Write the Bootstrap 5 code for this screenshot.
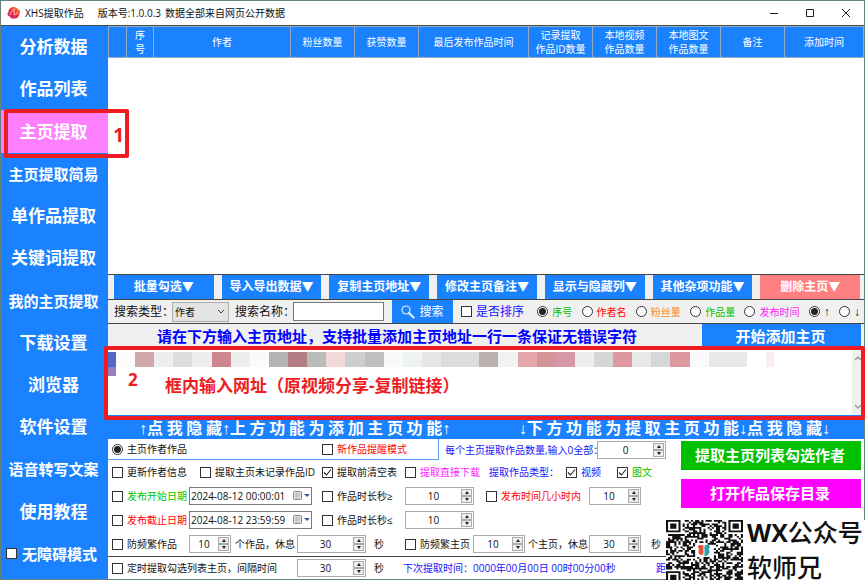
<!DOCTYPE html>
<html lang="zh-CN">
<head>
<meta charset="utf-8">
<meta name="viewport" content="width=device-width, initial-scale=1">
<title>XHS提取作品</title>
<link href="https://cdn.jsdelivr.net/npm/bootstrap@5.3.0/dist/css/bootstrap.min.css" rel="stylesheet">
<style>
:root { --blue: #1b82ff; --line: #454545; }
body { font: 10px/14px "Open Sans", "Noto Sans CJK SC", sans-serif; color: #111; background: #fff; }
button, input, select { font: inherit; color: inherit; border-radius: 0; }
.app { min-height: 100vh; border: 1px solid #66807c; }
.titlebar { height: 25px; border-bottom: 1px solid #454a42; padding-left: 6px; gap: 4px; }
.titlebar .brand { margin-right: 10px; }
.winbtn { width: 36px; border: 0; background: none; padding: 0; line-height: 0; }
.blue { background: var(--blue); color: #fff; }
.side { width: 107px; padding-bottom: 4px; }
.side button, .side label { font-size: 17px; line-height: 22px; font-weight: 700; color: #fff; background: none; border: 0; padding: 0 2px 0 0; white-space: nowrap; }
.side .long { font-size: 15px; }
.side button.current { background: #ff80ff; }
.access { padding-left: 5px; gap: 1px; }
.body-col { min-width: 0; }
.heads { table-layout: fixed; font-size: 10px; line-height: 14px; color: #fff; }
.heads th { background: var(--blue); font-weight: 400; height: 31px; padding: 0; border: 1px solid #94aac4; text-align: center; vertical-align: middle; }
.w18 { width: 18px; } .w27 { width: 27px; } .w64 { width: 64px; } .w79 { width: 79px; } .w110 { width: 110px; }
.gray { background: #f0f0f0; }
.rule { border-top: 1px solid var(--line); }
.tools { padding: 0 4px 0 6px; gap: 8px; height: 25px; }
.tools button { border: 0; font-size: 12px; font-weight: 700; flex: 1 1 0; padding: 0 0 1px; white-space: nowrap; }
.danger { background: #ff8080; color: #fff; }
.search { height: 24px; padding: 0 4px 0 6px; font-size: 12px; white-space: nowrap; }
.search .cap { width: 58px; }
.search .choice { font-size: 10px; }
.search .sorting { font-size: 12px; margin-right: 4px; }
.search select { width: 57px; height: 20px; font-size: 10px; padding: 0 2px; border: 1px solid #adadad; background: #e3e3e3; appearance: none; }
.pick { width: 57px; margin-right: 6px; }
.pick svg { right: 4px; top: 7px; pointer-events: none; }
.search .name { width: 91px; height: 19px; border: 1px solid #777; background: #fff; margin-right: 8px; }
.go { width: 61px; height: 23px; border: 0; padding: 0; }
input[type=checkbox], input[type=radio] { appearance: none; width: 11px; height: 11px; margin: 0 4px 0 0; border: 1px solid #333; background: #fff; flex: none; }
input[type=radio] { border-radius: 50%; }
input[type=radio]:checked { background: radial-gradient(circle, #222 0 3px, #fff 4px); }
input[type=checkbox]:checked { background: #fff url("data:image/svg+xml,%3Csvg xmlns='http://www.w3.org/2000/svg' viewBox='0 0 9 9'%3E%3Cpath d='M1 4.5 3.5 7 8 1.5' fill='none' stroke='%23222' stroke-width='1.1'/%3E%3C/svg%3E"); }
.choice { display: inline-flex; align-items: center; white-space: nowrap; }
.c-green { color: #00c400; } .c-red { color: #f00; } .c-orange { color: #ff8a1c; } .c-pink { color: #ff1cff; } .c-blue { color: #1414ff; }
.notice { height: 27px; font-size: 15px; font-weight: 700; padding-right: 3px; }
.notice p { color: #00f; padding: 0 16px 2px 0; white-space: nowrap; }
.notice button { width: 159px; border: 0; font-size: 15px; font-weight: 700; padding: 0 2px 3px 0; }
.urls { height: 66px; border-bottom: 1px solid var(--blue); }
.urls textarea { border: 0; resize: none; outline: 0; overflow: hidden; }
.scroller { width: 12px; padding: 5px 0; background: #f0f0f0; }
.strip { left: 0; top: 2px; }
.toggles { height: 23px; font: 700 16px/20px "Noto Sans CJK SC", sans-serif; white-space: nowrap; padding: 0 34px 0 31px; }
.arrow { font-family: "Liberation Sans", sans-serif; font-weight: 400; }
.search .arrow { font-size: 12px; font-weight: 700; }
.toggles button { border: 0; background: none; padding: 0; color: #fff; font-weight: 700; }
.panel { height: 140px; white-space: nowrap; }
.line { display: grid; align-items: center; padding-left: 4px; height: 24px; }
.mode { width: 331px; height: 21px; border: 1px solid #5da0f5; border-left: 0; border-top: 0; grid-template-columns: 210px 1fr; }
.top-line { height: 21px; }
.amount { width: 152px; margin-left: 6px; }
.l2 { grid-template-columns: 88px 122px 83px 84px 77px 51px 1fr; }
.l3 { grid-template-columns: 77px 133px 83px 81px 103px 1fr; }
.l5 { grid-template-columns: 77px 46px 62px 77px 31px 68px 55px 61px 62px 1fr; }
.l6 { grid-template-columns: 185px 77px 29px 70px 183px 1fr; height: 23px; }
.spin, .when { display: flex; height: 18px; border: 1px solid #ababab; background: #fff; }
.when { width: 123px; border-color: #7a7a7a; }
.spin input, .when input { flex: 1 1 0; min-width: 0; border: 0; padding: 0; background: none; outline: 0; }
.spin input { text-align: center; }
.when input { padding-left: 1px; }
.when button { border: 0; background: none; padding: 0 1px 0 0; line-height: 0; }
.s42 { width: 42px; } .s52 { width: 52px; } .s69 { width: 69px; }
.ud { width: 12px; display: flex; flex-direction: column; padding: 1px 1px 1px 0; }
.ud button { flex: 1; border: 1px solid #aaa; background: #eee; padding: 0; min-height: 0; }
.ud button::after { content: ""; display: block; width: 0; margin: auto; border: 2px solid transparent; border-top-width: 0; border-bottom: 3px solid #222; }
.ud button + button::after { border-bottom-width: 0; border-top: 3px solid #222; }
.actions { width: 183px; padding: 2px 3px 0 0; gap: 9px; }
.actions button { height: 29px; border: 0; color: #fff; font-size: 15px; font-weight: 700; padding: 0 2px 2px 0; }
.save { background: #f0f; } .fetch { background: #00c000; }
.frame { border: 4px solid #ee1c22; border-radius: 2px; pointer-events: none; color: #ee1c22; font-size: 17px; line-height: 22px; font-weight: 700; z-index: 3; }
.frame1 { left: 3px; top: -1px; right: -21px; bottom: -5px; }
.frame1 span { right: 1px; top: 11px; font-size: 19px; }
.frame2 { left: -4px; right: -1px; top: -4px; bottom: -5px; }
.n2 { left: 20px; top: 19px; } .tip { left: 57px; top: 25px; white-space: nowrap; }
.account { right: -1px; bottom: -1px; width: 199px; height: 60px; background: #fff; font: 500 25px/25px "Open Sans", "Noto Sans CJK SC", sans-serif; color: #111; white-space: nowrap; z-index: 4; gap: 4px; }
.account b { font-weight: 700; }
</style>
<script src="https://cdn.jsdelivr.net/npm/bootstrap@5.3.0/dist/js/bootstrap.bundle.min.js"></script>
</head>
<body>
<div class="app d-flex flex-column position-relative">
  <header class="titlebar d-flex align-items-center">
    <svg width="14" height="14" viewBox="0 0 14 14" aria-hidden="true"><defs><linearGradient id="lg" x1="0" y1="1" x2="1" y2="0"><stop offset="0" stop-color="#b42a86"/><stop offset=".5" stop-color="#ee2c3c"/><stop offset="1" stop-color="#ff9a3c"/></linearGradient></defs><path d="M7 1C9 1 10 2 11 3c2 1 3 3 1.500 5C12 11 10 13 7 12.500 5 13 3 12 3 10.500 0 10 0 7 1.500 6 1 3 4 1 7 1Z" fill="url(#lg)"/><path d="M3 9C4 5 6 4 7 5s-1 4 1 4 1-4 3-2M6 4l2-1" fill="none" stroke="#fff" stroke-opacity=".7"/></svg>
    <span class="brand">XHS提取作品</span><span>版本号:1.0.0.3</span><span>数据全部来自网页公开数据</span>
    <div class="ms-auto d-flex">
      <button class="winbtn" aria-label="最小化"><svg width="12" height="12"><path d="M2 6.500h8" stroke="#222"/></svg></button>
      <button class="winbtn" aria-label="最大化"><svg width="12" height="12"><path d="M2.500 2.500h7v7h-7z" fill="none" stroke="#222"/></svg></button>
      <button class="winbtn" aria-label="关闭"><svg width="12" height="12"><path d="m2 2 8 8m0-8-8 8" stroke="#222"/></svg></button>
    </div>
  </header>
  <div class="d-flex flex-grow-1">
    <nav class="side blue d-flex flex-column flex-shrink-0">
      <button class="flex-fill">分析数据</button>
      <button class="flex-fill">作品列表</button>
      <div class="flex-fill d-flex position-relative"><button class="current w-100">主页提取</button><div class="frame frame1 position-absolute"><span class="position-absolute">1</span></div></div>
      <button class="flex-fill long">主页提取简易</button>
      <button class="flex-fill">单作品提取</button>
      <button class="flex-fill">关键词提取</button>
      <button class="flex-fill long">我的主页提取</button>
      <button class="flex-fill">下载设置</button>
      <button class="flex-fill">浏览器</button>
      <button class="flex-fill">软件设置</button>
      <button class="flex-fill long">语音转写文案</button>
      <button class="flex-fill">使用教程</button>
      <div class="access flex-fill d-flex align-items-center"><input type="checkbox" id="acc"><label for="acc" class="long">无障碍模式</label></div>
    </nav>
    <main class="body-col flex-grow-1 d-flex flex-column">
      <div class="flex-grow-1">
        <table class="heads w-100">
          <thead><tr><th class="w18" aria-label="选择"></th><th class="w27">序<br>号</th><th>作者</th><th class="w64">粉丝数量</th><th class="w64">获赞数量</th><th class="w110">最后发布作品时间</th><th class="w64">记录提取<br>作品ID数量</th><th class="w64">本地视频<br>作品数量</th><th class="w64">本地图文<br>作品数量</th><th class="w64">备注</th><th class="w79">添加时间</th></tr></thead>
        </table>
      </div>
      <div class="tools gray rule d-flex">
        <button class="blue">批量勾选▼</button><button class="blue">导入导出数据▼</button><button class="blue">复制主页地址▼</button><button class="blue">修改主页备注▼</button><button class="blue">显示与隐藏列▼</button><button class="blue">其他杂项功能▼</button><button class="danger">删除主页▼</button>
      </div>
      <form class="search gray rule d-flex align-items-center">
        <label class="cap" for="kind">搜索类型：</label>
        <div class="pick position-relative d-flex"><select id="kind"><option>作者</option></select><svg class="position-absolute" width="8" height="6"><path d="m1 1 3 3 3-3" fill="none" stroke="#444"/></svg></div>
        <label class="cap" for="key">搜索名称：</label><input class="name" id="key" type="text">
        <button type="button" class="go blue d-flex align-items-center justify-content-center me-2"><svg width="14" height="14" viewBox="0 0 14 14" class="me-1"><circle cx="5" cy="5" r="4" fill="none" stroke="#e2efff" stroke-width="1.200"/><path d="m8 8 4.500 4.500" stroke="#d8e8ff" stroke-width="2.400" stroke-linecap="round"/></svg>搜索</button>
        <div class="d-flex flex-grow-1 justify-content-between align-items-center">
          <label class="choice sorting c-blue"><input type="checkbox">是否排序</label>
          <label class="choice c-green"><input type="radio" name="sort" checked>序号</label>
          <label class="choice c-red"><input type="radio" name="sort">作者名</label>
          <label class="choice c-orange"><input type="radio" name="sort">粉丝量</label>
          <label class="choice c-green"><input type="radio" name="sort">作品量</label>
          <label class="choice c-pink"><input type="radio" name="sort">发布时间</label>
          <label class="choice"><input type="radio" name="dir" checked><span class="arrow">↑</span></label>
          <label class="choice"><input type="radio" name="dir"><span class="arrow">↓</span></label>
        </div>
      </form>
      <div class="notice gray rule d-flex">
        <p class="mb-0 flex-grow-1 d-flex align-items-center justify-content-center">请在下方输入主页地址，支持批量添加主页地址一行一条保证无错误字符</p>
        <button class="blue">开始添加主页</button>
      </div>
      <div class="urls d-flex position-relative">
        <textarea class="flex-grow-1" aria-label="主页地址"></textarea>
        <svg id="strip" class="strip position-absolute" width="700" height="24" aria-hidden="true"></svg>
        <div class="scroller d-flex flex-column justify-content-between align-items-center"><svg width="8" height="6"><path d="m1 5 3-3 3 3" fill="none" stroke="#999" stroke-width="1.500"/></svg><svg width="8" height="6"><path d="m1 1 3 3 3-3" fill="none" stroke="#999" stroke-width="1.500"/></svg></div>
        <div class="frame frame2 position-absolute"><span class="n2 position-absolute">2</span><span class="tip position-absolute">框内输入网址（原视频分享-复制链接）</span></div>
      </div>
      <div class="toggles blue d-flex align-items-end justify-content-between">
        <button><span class="arrow">↑</span>点 我 隐 藏<span class="arrow">↑</span>上 方 功 能 为 添 加 主 页 功 能<span class="arrow">↑</span></button>
        <button><span class="arrow">↓</span>下 方 功 能 为 提 取 主 页 功 能<span class="arrow">↓</span>点 我 隐 藏<span class="arrow">↓</span></button>
      </div>
      <section class="panel position-relative d-flex">
        <div class="flex-grow-1">
          <div class="d-flex align-items-center top-line">
            <div class="mode line"><label class="choice"><input type="radio" name="mode" checked>主页作者作品</label><label class="choice c-red"><input type="checkbox">新作品提醒模式</label></div>
            <label class="c-blue amount" for="n0">每个主页提取作品数量,输入0全部：</label>
            <div class="spin s69"><input id="n0" value="0"><span class="ud"><button aria-label="增加"></button><button aria-label="减少"></button></span></div>
          </div>
          <div class="line l2">
            <label class="choice"><input type="checkbox">更新作者信息</label>
            <label class="choice"><input type="checkbox">提取主页未记录作品ID</label>
            <label class="choice"><input type="checkbox" checked>提取前清空表</label>
            <label class="choice c-pink"><input type="checkbox">提取直接下载</label>
            <span class="c-blue">提取作品类型：</span>
            <label class="choice c-blue"><input type="checkbox" checked>视频</label>
            <label class="choice c-green"><input type="checkbox" checked>图文</label>
          </div>
          <div class="line l3">
            <label class="choice c-green"><input type="checkbox">发布开始日期</label>
            <div class="when"><input aria-label="开始日期" value="2024-08-12 00:00:01"><button aria-label="选择日期"><svg width="18" height="12"><rect x="1.500" y="1.500" width="8" height="8" rx="1" fill="#dcdce0" stroke="#8d8790"/><path d="M3 4h5M3 6h5M5 3v6" stroke="#b9b9c4"/><path d="M12 4h6l-3 3z" fill="#3c5a96"/></svg></button></div>
            <label class="choice"><input type="checkbox">作品时长秒≥</label>
            <div class="spin s69"><input aria-label="最短秒数" value="10"><span class="ud"><button aria-label="增加"></button><button aria-label="减少"></button></span></div>
            <label class="choice c-red"><input type="checkbox">发布时间几小时内</label>
            <div class="spin s52"><input aria-label="小时" value="10"><span class="ud"><button aria-label="增加"></button><button aria-label="减少"></button></span></div>
          </div>
          <div class="line l3">
            <label class="choice c-red"><input type="checkbox">发布截止日期</label>
            <div class="when"><input aria-label="截止日期" value="2024-08-12 23:59:59"><button aria-label="选择日期"><svg width="18" height="12"><rect x="1.500" y="1.500" width="8" height="8" rx="1" fill="#dcdce0" stroke="#8d8790"/><path d="M3 4h5M3 6h5M5 3v6" stroke="#b9b9c4"/><path d="M12 4h6l-3 3z" fill="#3c5a96"/></svg></button></div>
            <label class="choice"><input type="checkbox">作品时长秒≤</label>
            <div class="spin s69"><input aria-label="最长秒数" value="10"><span class="ud"><button aria-label="增加"></button><button aria-label="减少"></button></span></div>
          </div>
          <div class="line l5">
            <label class="choice"><input type="checkbox">防频繁作品</label>
            <div class="spin s42"><input aria-label="作品个数" value="10"><span class="ud"><button aria-label="增加"></button><button aria-label="减少"></button></span></div>
            <span>个作品，休息</span>
            <div class="spin s69"><input aria-label="作品休息秒数" value="30"><span class="ud"><button aria-label="增加"></button><button aria-label="减少"></button></span></div>
            <span>秒</span>
            <label class="choice"><input type="checkbox">防频繁主页</label>
            <div class="spin s52"><input aria-label="主页个数" value="10"><span class="ud"><button aria-label="增加"></button><button aria-label="减少"></button></span></div>
            <span>个主页，休息</span>
            <div class="spin s52"><input aria-label="主页休息秒数" value="30"><span class="ud"><button aria-label="增加"></button><button aria-label="减少"></button></span></div>
            <span>秒</span>
          </div>
          <div class="line l6 rule">
            <label class="choice"><input type="checkbox">定时提取勾选列表主页，间隔时间</label>
            <div class="spin s69"><input aria-label="间隔秒数" value="30"><span class="ud"><button aria-label="增加"></button><button aria-label="减少"></button></span></div>
            <span>秒</span><span class="c-blue">下次提取时间：</span><span class="c-blue">0000年00月00日 00时00分00秒</span><span class="c-blue">距</span>
          </div>
        </div>
        <div class="actions d-flex flex-column flex-shrink-0">
          <button class="fetch">提取主页列表勾选作者</button>
          <button class="save">打开作品保存目录</button>
        </div>
        <aside class="account position-absolute d-flex">
          <svg id="qr" class="flex-shrink-0" width="77" height="60" viewBox="0 0 37 34" preserveAspectRatio="none" role="img" aria-label="二维码"></svg>
          <div class="d-flex flex-column justify-content-between"><div><b>WX</b>公众号</div><div>软师兄</div></div>
        </aside>
      </section>
    </main>
  </div>
</div>
<script>
const cells = ['fcfcfa','cfa9ab','eee','ddd','eee','cd888f','eee','fafafa','b3b3b3','b37e84','bbb','f1d9db','ccced0','bfbfbd','f9f9f8','eff2f2','e6e6e6','dedbdb','dbdddc','bab0b0','f2f2f2','e4a5ab','d3959a','d799a7','eee','d6d6d9','dd999f','e7e9e9','d6d8d8','dd999f','fafafa','e9e9e9','e9e9e9','fff'];
let s = '<rect width="8" height="15" fill="#5468c8"/><rect y="15" width="8" height="9" fill="#957fbd"/><rect x="658" width="8" height="15" fill="#fbeeef"/>';
cells.forEach((c, i) => {
  const a = Math.round(8 + i * 19.120), b = Math.round(8 + (i + 1) * 19.120);
  if (c !== 'fff') s += `<rect x="${a}" width="${b - a}" height="15" fill="#${c}"/>`;
});
document.getElementById('strip').innerHTML = s;

let d = '', seed = 11;
const finder = (x, y) => `M${x} ${y}h7v7h-7zM${x + 1} ${y + 1}v5h5v-5zM${x + 2} ${y + 2}h3v3h-3z`;
for (let y = 0; y < 37; y++) for (let x = 0; x < 37; x++) {
  seed = (seed * 1103515245 + 12345) % 2147483648;
  const corner = (x < 8 && y < 8) || (x > 28 && y < 8) || (x < 8 && y > 27);
  const hub = x > 13 && x < 23 && y > 13 && y < 21;
  if (!corner && !hub && seed / 2147483648 > 0.46) d += `M${x} ${y}h1v1h-1z`;
}
document.getElementById('qr').innerHTML = `<path d="${d}${finder(0, 0)}${finder(30, 0)}${finder(0, 29)}" fill="#111"/><path d="M18 14.500c-3-1-3 1-2 2-1 2 0 4 2 3z" fill="#e8503c"/><path d="M18.500 14.500c3-1 3 1 2 2 1 2 0 4-2 4z" fill="#2aa3ad"/>`;
</script>
</body>
</html>
